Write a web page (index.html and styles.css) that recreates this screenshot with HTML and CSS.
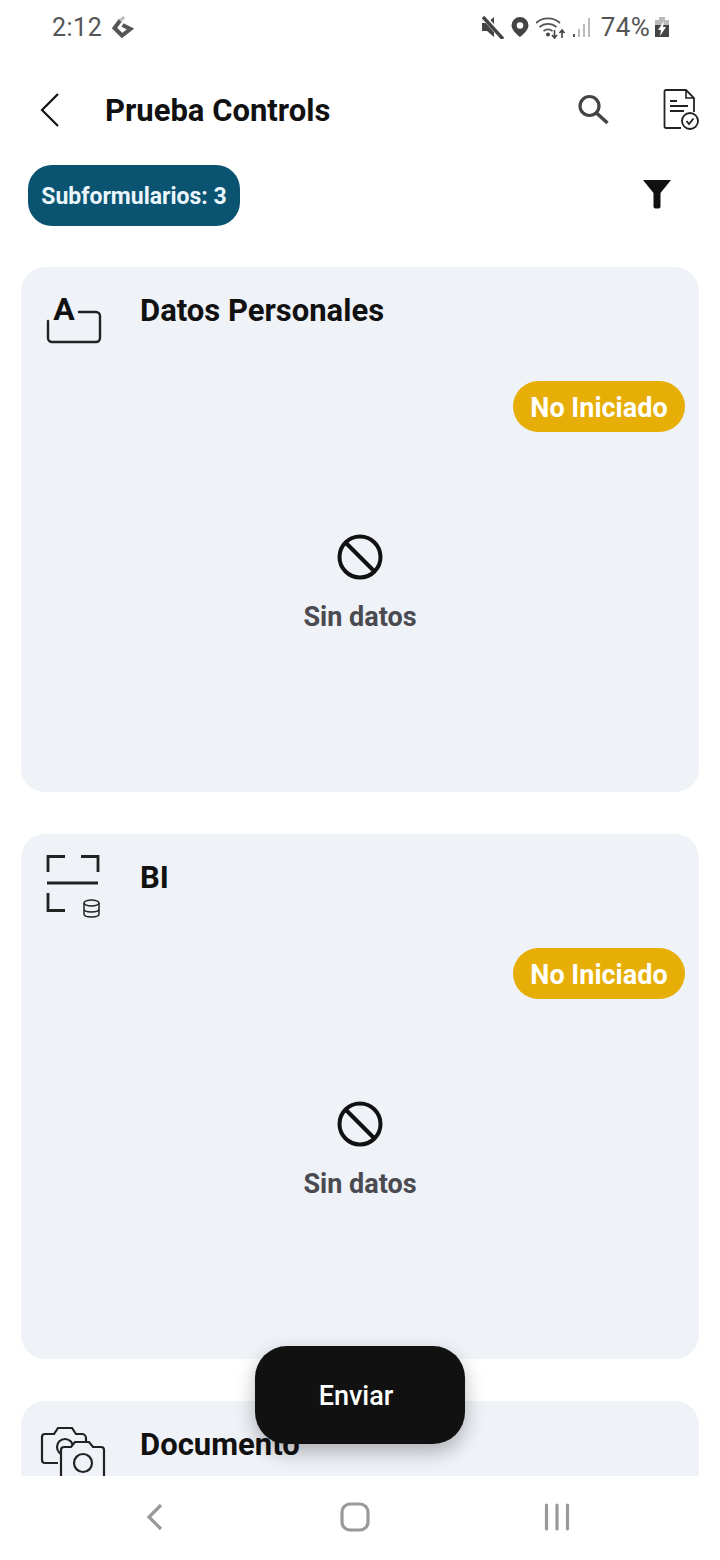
FILE: index.html
```html
<!DOCTYPE html>
<html lang="es">
<head>
    <meta charset="UTF-8">
    <title>Prueba Controls</title>
    <link rel="stylesheet" href="styles.css">
</head>
<body>
    <div class="screen">
        <!-- status bar -->
        <div class="status">
            <div class="status-left">
                <span class="clock">2:12</span>
                <svg class="status-g" width="24" height="24" viewBox="0 0 24 24"><path d="M10.500 5L4.500 13 12 20.500 20.500 14 12.500 10" fill="none" stroke="#555" stroke-width="4"/><path d="M10 6l4-4" fill="none" stroke="#bbb" stroke-width="3"/></svg>
            </div>
            <div class="status-right">
                <svg width="24" height="24" viewBox="0 0 24 24"><path d="M2 8h5l7-6v20l-7-6H2z" fill="#444"/><path d="M3 1l20 22" stroke="#fff" stroke-width="5.500"/><path d="M3 2l20 22" stroke="#444" stroke-width="3.400"/></svg>
                <svg width="20" height="24" viewBox="0 0 20 24"><path fill-rule="evenodd" d="M10 2a8.500 8.500 0 0 1 8.500 8.500C18.500 16 10 22 10 22S1.500 16 1.500 10.500A8.500 8.500 0 0 1 10 2zm0 5.200a3.300 3.300 0 1 0 0 6.600 3.300 3.300 0 0 0 0-6.600z" fill="#444"/></svg>
                <svg width="30" height="24" viewBox="0 0 30 24"><g fill="none" stroke="#555" stroke-width="1.800"><path d="M0 8a18 18 0 0 1 24 0"/><path d="M3.500 12a13 13 0 0 1 17 0"/><path d="M7.500 16a7.500 7.500 0 0 1 9 0"/></g><circle cx="12" cy="19.500" r="2" fill="#444"/><path d="M18.500 15v8m-2.500-3l2.500 3 2.500-3M26 23v-8m-2.500 3l2.500-3 2.500 3" fill="none" stroke="#444" stroke-width="1.600"/></svg>
                <svg width="20" height="24" viewBox="0 0 20 24"><g fill="#bbb"><rect x="6" y="14" width="2" height="8"/><rect x="11" y="9" width="2" height="13"/><rect x="16" y="3" width="2" height="19"/></g><rect x="1" y="19" width="2" height="3" fill="#555"/></svg>
                <span class="battery-text">74%</span>
                <svg width="16" height="24" viewBox="0 0 16 24"><rect x="5" y="2" width="6" height="3" fill="#bbb"/><rect x="1" y="5" width="14" height="5" fill="#bbb"/><rect x="1" y="10" width="14" height="12" fill="#444"/><path d="M10 6L4 15h3l-1 6 6-9H9z" fill="#fff"/></svg>
            </div>
        </div>

        <!-- top bar -->
        <div class="appbar">
            <svg class="back" width="24" height="36" viewBox="0 0 24 36"><path d="M20 2L4 18l16 16" fill="none" stroke="#111" stroke-width="2.200"/></svg>
            <div class="appbar-title">Prueba Controls</div>
            <svg class="search" width="36" height="36" viewBox="0 0 36 36"><circle cx="14.500" cy="14" r="9.500" fill="none" stroke="#444" stroke-width="3.200"/><path d="M21.500 21l11 10" stroke="#444" stroke-width="3.600"/></svg>
            <svg class="doc" width="36" height="42" viewBox="0 0 36 42">
                <path d="M3 1h20l8 8v14M18 39H3a1.500 1.500 0 0 1-1.500-1.500V2.500A1.500 1.500 0 0 1 3 1" fill="none" stroke="#222" stroke-width="1.800"/>
                <path d="M23 1v8h8" fill="none" stroke="#222" stroke-width="1.600"/>
                <path d="M7 12h7M7 17h18M7 22h14" stroke="#222" stroke-width="1.800"/>
                <circle cx="27" cy="32" r="8" fill="#fff" stroke="#222" stroke-width="1.800"/>
                <path d="M23.500 32l2.500 3 4.500-5.500" fill="none" stroke="#222" stroke-width="1.800"/>
            </svg>
        </div>

        <!-- subforms count and filter -->
        <div class="toolbar">
            <div class="chip">Subformularios: 3</div>
            <svg class="filter" width="30" height="30" viewBox="0 0 30 30"><path d="M1 1h28L18.500 14v13.500a2 2 0 0 1-2 2h-3a2 2 0 0 1-2-2V14z" fill="#111"/></svg>
        </div>

        <!-- cards -->
        <div class="list">
            <div class="card">
                <div class="card-head">
                    <svg class="card-icon" width="60" height="60" viewBox="0 0 60 60">
                        <path d="M2 33v17a4 4 0 0 0 4 4h44a4 4 0 0 0 4-4V28a4 4 0 0 0-4-4H33" fill="none" stroke="#222" stroke-width="2.400" stroke-linecap="round"/>
                        <text class="icon-letter" x="18" y="32">A</text>
                    </svg>
                    <div class="card-title">Datos Personales</div>
                </div>
                <div class="badge-row"><span class="badge">No Iniciado</span></div>
                <div class="empty">
                    <svg width="46" height="46" viewBox="0 0 46 46"><circle cx="23" cy="23" r="20.500" fill="none" stroke="#111" stroke-width="4"/><path d="M8.500 8.500l29 29" stroke="#111" stroke-width="4"/></svg>
                    <div class="empty-text">Sin datos</div>
                </div>
            </div>

            <div class="card">
                <div class="card-head">
                    <svg class="card-icon" width="60" height="64" viewBox="0 0 60 64">
                        <path d="M2 17V1.500H19M35 1.500H52V17M1 28H52M2 38V55.500H19" fill="none" stroke="#222" stroke-width="2.800"/>
                        <g fill="none" stroke="#222" stroke-width="1.500"><ellipse cx="45.500" cy="48" rx="7.500" ry="3"/><path d="M38 48v11c0 2 3.500 3 7.500 3s7.500-1 7.500-3V48M38 54c0 2 3.500 3 7.500 3s7.500-1 7.500-3"/></g>
                    </svg>
                    <div class="card-title">BI</div>
                </div>
                <div class="badge-row"><span class="badge">No Iniciado</span></div>
                <div class="empty">
                    <svg width="46" height="46" viewBox="0 0 46 46"><circle cx="23" cy="23" r="20.500" fill="none" stroke="#111" stroke-width="4"/><path d="M8.500 8.500l29 29" stroke="#111" stroke-width="4"/></svg>
                    <div class="empty-text">Sin datos</div>
                </div>
            </div>

            <div class="card">
                <div class="card-head">
                    <svg class="card-icon" width="60" height="70" viewBox="0 0 60 70">
                        <g fill="none" stroke="#222" stroke-width="2.200">
                            <path d="M12 41H-1a3 3 0 0 1-3-3V15a3 3 0 0 1 3-3H8l4-6h14l4 6h6a4 4 0 0 1 4 4v4"/>
                            <circle cx="19" cy="25" r="8"/>
                            <path class="cam-front" d="M15 70V28a3 3 0 0 1 3-3h7l4-5h14l4 5h8a3 3 0 0 1 3 3V70"/>
                            <circle cx="37" cy="41" r="9"/>
                        </g>
                    </svg>
                    <div class="card-title">Documento</div>
                </div>
            </div>
        </div>

        <!-- bottom nav -->
        <div class="nav">
            <svg width="18" height="28" viewBox="0 0 18 28"><path d="M15 2L3 14l12 12" fill="none" stroke="#999" stroke-width="3.200"/></svg>
            <svg class="nav-home" width="30" height="30" viewBox="0 0 30 30"><rect x="2" y="2" width="26" height="26" rx="8" fill="none" stroke="#999" stroke-width="3.200"/></svg>
            <svg width="28" height="28" viewBox="0 0 28 28"><path d="M3.500 2v24M14 2v24M24.500 2v24" stroke="#999" stroke-width="3.200" stroke-linecap="round"/></svg>
        </div>

        <button class="send">Enviar</button>
    </div>
</body>
</html>
```

FILE: styles.css
```css
*{margin:0; padding:0; box-sizing:border-box;}
body{font-family:Roboto, "Noto Sans", sans-serif; background:#fff;}
svg{display:block; flex:none;}

.screen{width:720px; height:1560px; position:relative; overflow:hidden; display:flex; flex-direction:column; background:#fff;}

.status{height:54px; display:flex; justify-content:space-between; align-items:center; padding:0 50px 0 52px;}
.status-left{display:flex; align-items:center; gap:8px;}
.clock{font-size:25px; color:#555; letter-spacing:.5px;}
.status-right{display:flex; align-items:center; gap:6px;}
.battery-text{font-size:26px; color:#555; margin:0 -2px 0 3px; letter-spacing:.3px;}

.appbar{height:111px; display:flex; align-items:center; padding:0 21px 0 38px;}
.appbar-title{font-size:31px; font-weight:700; color:#111; margin:2px 0 0 43px; flex:1;}
.search{margin-right:52px;}

.toolbar{display:flex; align-items:center; justify-content:space-between; padding:0 48px 0 28px; height:61px;}
.filter{margin-bottom:3px;}
.chip{height:61px; width:212px; border-radius:24px; background:#0a5371; color:#eaf6fb; font-size:23px; font-weight:700; display:flex; align-items:center; justify-content:center; padding-top:2px; flex:none;}

.list{flex:1; overflow:hidden; padding:41px 21px 0; display:flex; flex-direction:column; gap:42px; min-height:0;}
.card{flex:none; height:525px; background:#eff2f7; border-radius:24px; padding:21px 14px 0 25px;}
.card-head{display:flex; align-items:flex-start; height:93px;}
.card-icon{margin-right:34px; overflow:visible;}
.icon-letter{font-size:32px; font-weight:700; fill:#111; text-anchor:middle;}
.cam-front{fill:#eff2f7;}
.card-title{font-size:31px; font-weight:700; color:#111; line-height:46px;}
.badge-row{display:flex; justify-content:flex-end;}
.badge{height:51px; width:172px; border-radius:26px; background:#e6ae06; color:#fff; font-size:27px; font-weight:700; display:flex; align-items:center; justify-content:center; padding-top:2px;}
.empty{display:flex; flex-direction:column; align-items:center; margin:102px 11px 0 0;}
.empty-text{font-size:27px; font-weight:700; color:#4a4a50; margin-top:21px;}

.nav{height:84px; flex:none; background:#fff; display:flex; align-items:center; justify-content:space-between; padding:0 149px 2px 146px;}
.nav-home{margin-left:2px;}

.send{position:absolute; left:255px; top:1346px; width:210px; height:98px; border:none; border-radius:32px; background:#111; color:#fff; font-family:inherit; font-size:27px; font-weight:500; box-shadow:0 8px 20px rgba(0,0,0,.28); padding:2px 8px 0 0;}
```
